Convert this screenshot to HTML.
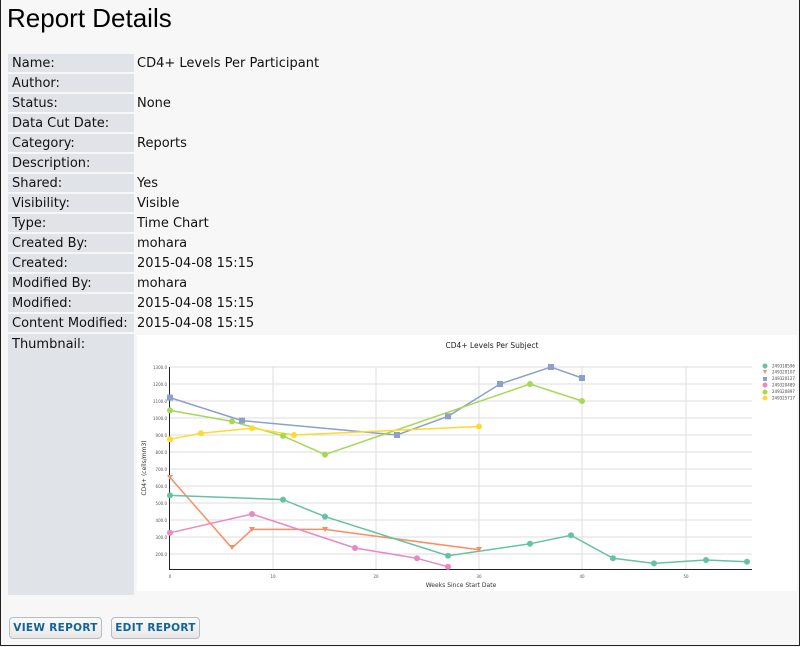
<!DOCTYPE html>
<html><head><style>
body{margin:0;width:800px;height:647px;overflow:hidden;background:#f7f7f7;font-family:"DejaVu Sans",sans-serif;font-size:13px;color:#111;position:relative}
.frame{position:absolute;left:0;top:0;width:798px;height:645px;border:1px solid #222;border-top:none;box-sizing:content-box}
h1{position:absolute;left:7px;top:3px;margin:0;font:26px "Liberation Sans",sans-serif;color:#000}
.l{position:absolute;left:8px;width:126px;height:18px;background:#e0e4e8;line-height:19px;padding-left:4px;box-sizing:border-box;white-space:nowrap}
.v{position:absolute;left:137px;line-height:19px}
.btn{position:absolute;top:617px;height:20px;border:1px solid #b8bcc0;border-radius:4px;background:linear-gradient(#fbfbfb,#e6e6e6);color:#126495;font-weight:bold;font-size:10.5px;line-height:20px;text-align:center;letter-spacing:.3px}
</style></head><body>
<div class="frame"></div>
<h1>Report Details</h1>
<div class="l" style="top:54px">Name:</div><div class="v" style="top:54px">CD4+ Levels Per Participant</div>
<div class="l" style="top:74px">Author:</div>
<div class="l" style="top:94px">Status:</div><div class="v" style="top:94px">None</div>
<div class="l" style="top:114px">Data Cut Date:</div>
<div class="l" style="top:134px">Category:</div><div class="v" style="top:134px">Reports</div>
<div class="l" style="top:154px">Description:</div>
<div class="l" style="top:174px">Shared:</div><div class="v" style="top:174px">Yes</div>
<div class="l" style="top:194px">Visibility:</div><div class="v" style="top:194px">Visible</div>
<div class="l" style="top:214px">Type:</div><div class="v" style="top:214px">Time Chart</div>
<div class="l" style="top:234px">Created By:</div><div class="v" style="top:234px">mohara</div>
<div class="l" style="top:254px">Created:</div><div class="v" style="top:254px">2015-04-08 15:15</div>
<div class="l" style="top:274px">Modified By:</div><div class="v" style="top:274px">mohara</div>
<div class="l" style="top:294px">Modified:</div><div class="v" style="top:294px">2015-04-08 15:15</div>
<div class="l" style="top:314px">Content Modified:</div><div class="v" style="top:314px">2015-04-08 15:15</div>
<div class="l" style="top:334px;height:261px;padding-top:2px;line-height:17px">Thumbnail:</div>
<svg style="position:absolute;left:0;top:0" width="800" height="647">
<rect x="137" y="335" width="660" height="256" fill="#fff"/>
<text x="492" y="348" font-size="7.5" text-anchor="middle" font-family="DejaVu Sans" fill="#222">CD4+ Levels Per Subject</text>
<g stroke="#ddd" stroke-width="1">
<line x1="170" x2="752" y1="367" y2="367"/><line x1="170" x2="752" y1="384" y2="384"/><line x1="170" x2="752" y1="401" y2="401"/><line x1="170" x2="752" y1="418" y2="418"/><line x1="170" x2="752" y1="435" y2="435"/><line x1="170" x2="752" y1="452" y2="452"/><line x1="170" x2="752" y1="469" y2="469"/><line x1="170" x2="752" y1="486" y2="486"/><line x1="170" x2="752" y1="503" y2="503"/><line x1="170" x2="752" y1="520" y2="520"/><line x1="170" x2="752" y1="537" y2="537"/><line x1="170" x2="752" y1="554" y2="554"/>
<line x1="273" x2="273" y1="367" y2="569"/><line x1="376" x2="376" y1="367" y2="569"/><line x1="479" x2="479" y1="367" y2="569"/><line x1="582" x2="582" y1="367" y2="569"/><line x1="686" x2="686" y1="367" y2="569"/>
</g>
<g stroke="#222"><line x1="169.5" x2="169.5" y1="367" y2="569"/><line x1="169" x2="752" y1="569.5" y2="569.5"/></g>
<g font-size="4" fill="#555" text-anchor="end" font-family="DejaVu Sans">
<text x="167" y="369">1300.0</text><text x="167" y="386">1200.0</text><text x="167" y="403">1100.0</text><text x="167" y="420">1000.0</text><text x="167" y="437">900.0</text><text x="167" y="454">800.0</text><text x="167" y="471">700.0</text><text x="167" y="488">600.0</text><text x="167" y="505">500.0</text><text x="167" y="522">400.0</text><text x="167" y="539">300.0</text><text x="167" y="556">200.0</text></g>
<g font-size="4" fill="#555" text-anchor="middle"><text x="170" y="578">0</text><text x="273" y="578">10</text><text x="376" y="578">20</text><text x="479" y="578">30</text><text x="582" y="578">40</text><text x="686" y="578">50</text></g>
<text x="461" y="587" font-size="6" text-anchor="middle" fill="#333">Weeks Since Start Date</text>
<text transform="translate(146,468) rotate(-90)" font-size="6" text-anchor="middle" fill="#333">CD4+ (cells/mm3)</text>
<g fill="none" stroke-width="1.5">
<polyline stroke="#8da0cb" points="170,397.6 242,420.6 397,435 448,416.3 500,384 551,367 582,378"/>
<polyline stroke="#a6d854" points="170,410.4 232,421.4 283,435.9 325,454.6 530,384 582,401"/>
<polyline stroke="#ffd92f" points="170,439.3 201,433.3 252,428.2 294,435 479,426.5"/>
<polyline stroke="#fc8d62" points="170,477.5 232,548 252,529.4 325,529.4 479,549.8"/>
<polyline stroke="#66c2a5" points="170,495.4 283,499.6 325,516.6 448,555.7 530,543.8 571,535.3 613,558.3 654,563.4 706,560 747,561.7"/>
<polyline stroke="#e78ac3" points="170,532.8 252,514 355,548 417,558.3 448,566.8"/>
</g>
<g fill="#8da0cb"><rect x="167" y="394.6" width="6" height="6"/><rect x="239" y="417.6" width="6" height="6"/><rect x="394" y="432" width="6" height="6"/><rect x="445" y="413.3" width="6" height="6"/><rect x="497" y="381" width="6" height="6"/><rect x="548" y="364" width="6" height="6"/><rect x="579" y="375" width="6" height="6"/></g>
<g fill="#a6d854"><circle cx="170" cy="410.4" r="3"/><circle cx="232" cy="421.4" r="3"/><circle cx="283" cy="435.9" r="3"/><circle cx="325" cy="454.6" r="3"/><circle cx="530" cy="384" r="3"/><circle cx="582" cy="401" r="3"/></g>
<g fill="#ffd92f"><circle cx="170" cy="439.3" r="3"/><circle cx="201" cy="433.3" r="3"/><circle cx="252" cy="428.2" r="3"/><circle cx="294" cy="435" r="3"/><circle cx="479" cy="426.5" r="3"/></g>
<g fill="#fc8d62"><path d="M167 475h6l-3 5z"/><path d="M229 545h6l-3 5z"/><path d="M249 527h6l-3 5z"/><path d="M322 527h6l-3 5z"/><path d="M476 547h6l-3 5z"/></g>
<g fill="#66c2a5"><circle cx="170" cy="495.4" r="3"/><circle cx="283" cy="499.6" r="3"/><circle cx="325" cy="516.6" r="3"/><circle cx="448" cy="555.7" r="3"/><circle cx="530" cy="543.8" r="3"/><circle cx="571" cy="535.3" r="3"/><circle cx="613" cy="558.3" r="3"/><circle cx="654" cy="563.4" r="3"/><circle cx="706" cy="560" r="3"/><circle cx="747" cy="561.7" r="3"/></g>
<g fill="#e78ac3"><circle cx="170" cy="532.8" r="3"/><circle cx="252" cy="514" r="3"/><circle cx="355" cy="548" r="3"/><circle cx="417" cy="558.3" r="3"/><circle cx="448" cy="566.8" r="3"/></g>
<g font-size="4" fill="#444">
<circle cx="765" cy="366" r="2.5" fill="#66c2a5"/><text x="772" y="367.5">249318596</text>
<path d="M763 370h4l-2 4z" fill="#fc8d62"/><text x="772" y="373.5">249320107</text>
<rect x="763" y="377" width="4" height="4" fill="#8da0cb"/><text x="772" y="380">249320127</text>
<circle cx="765" cy="385" r="2.5" fill="#e78ac3"/><text x="772" y="386.5">249320489</text>
<circle cx="765" cy="392" r="2.5" fill="#a6d854"/><text x="772" y="393">249320897</text>
<circle cx="765" cy="398" r="2.5" fill="#ffd92f"/><text x="772" y="399.5">249325717</text>
</g>
</svg>
<div class="btn" style="left:9px;width:91px">VIEW REPORT</div>
<div class="btn" style="left:111px;width:87px">EDIT REPORT</div>
</body></html>
